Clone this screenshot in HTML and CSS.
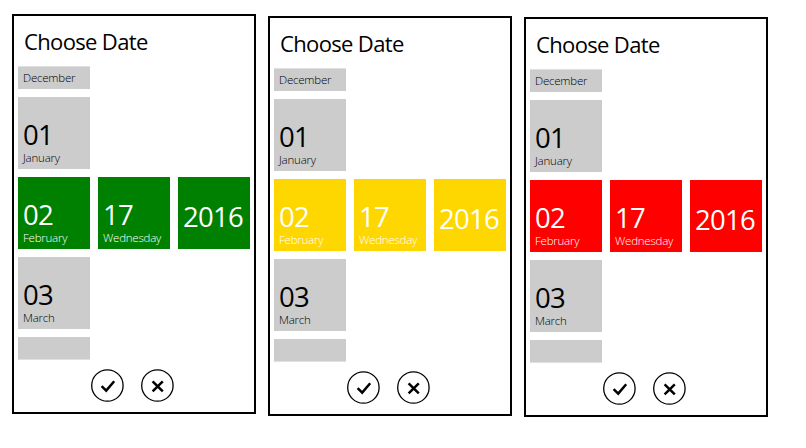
FILE: index.html
```
<!DOCTYPE html>
<html lang="en">
<head>
<meta charset="utf-8">
<title>Choose Date</title>
<link rel="stylesheet" href="styles.css">
</head>
<body>
<main class="pickers">
  <section class="picker green">
    <h1 class="title"><span>Choose Date</span></h1>
    <div class="columns">
      <div class="column">
        <div class="tile partial first"><span class="name">December</span></div>
        <div class="tile"><span class="number">01</span><span class="name">January</span></div>
        <div class="tile selected"><span class="number">02</span><span class="name">February</span></div>
        <div class="tile"><span class="number">03</span><span class="name">March</span></div>
        <div class="tile partial last"></div>
      </div>
      <div class="column"><div class="tile selected"><span class="number">17</span><span class="name">Wednesday</span></div></div>
      <div class="column"><div class="tile selected year"><span class="number">2016</span></div></div>
    </div>
    <div class="actions">
      <button class="action" aria-label="Accept"><svg viewBox="0 0 33 33"><circle cx="16.4" cy="16.5" r="15.7"/><path d="M10.6 17.2 15.2 21.6 23.2 12.2"/></svg></button>
      <button class="action" aria-label="Cancel"><svg viewBox="0 0 33 33"><circle cx="16.4" cy="16.5" r="15.7"/><path d="M11.6 12.3 21.8 22.3M21.8 12.3 11.6 22.3"/></svg></button>
    </div>
  </section>
  <section class="picker gold">
    <h1 class="title"><span>Choose Date</span></h1>
    <div class="columns">
      <div class="column">
        <div class="tile partial first"><span class="name">December</span></div>
        <div class="tile"><span class="number">01</span><span class="name">January</span></div>
        <div class="tile selected"><span class="number">02</span><span class="name">February</span></div>
        <div class="tile"><span class="number">03</span><span class="name">March</span></div>
        <div class="tile partial last"></div>
      </div>
      <div class="column"><div class="tile selected"><span class="number">17</span><span class="name">Wednesday</span></div></div>
      <div class="column"><div class="tile selected year"><span class="number">2016</span></div></div>
    </div>
    <div class="actions">
      <button class="action" aria-label="Accept"><svg viewBox="0 0 33 33"><circle cx="16.4" cy="16.5" r="15.7"/><path d="M10.6 17.2 15.2 21.6 23.2 12.2"/></svg></button>
      <button class="action" aria-label="Cancel"><svg viewBox="0 0 33 33"><circle cx="16.4" cy="16.5" r="15.7"/><path d="M11.6 12.3 21.8 22.3M21.8 12.3 11.6 22.3"/></svg></button>
    </div>
  </section>
  <section class="picker red">
    <h1 class="title"><span>Choose Date</span></h1>
    <div class="columns">
      <div class="column">
        <div class="tile partial first"><span class="name">December</span></div>
        <div class="tile"><span class="number">01</span><span class="name">January</span></div>
        <div class="tile selected"><span class="number">02</span><span class="name">February</span></div>
        <div class="tile"><span class="number">03</span><span class="name">March</span></div>
        <div class="tile partial last"></div>
      </div>
      <div class="column"><div class="tile selected"><span class="number">17</span><span class="name">Wednesday</span></div></div>
      <div class="column"><div class="tile selected year"><span class="number">2016</span></div></div>
    </div>
    <div class="actions">
      <button class="action" aria-label="Accept"><svg viewBox="0 0 33 33"><circle cx="16.4" cy="16.5" r="15.7"/><path d="M10.6 17.2 15.2 21.6 23.2 12.2"/></svg></button>
      <button class="action" aria-label="Cancel"><svg viewBox="0 0 33 33"><circle cx="16.4" cy="16.5" r="15.7"/><path d="M11.6 12.3 21.8 22.3M21.8 12.3 11.6 22.3"/></svg></button>
    </div>
  </section>
</main>
</body>
</html>
```
FILE: styles.css
```
* { box-sizing: border-box; }
body {
  margin: 0;
  background: #fff;
  color: #000;
  font-family: "Open Sans", "Noto Sans", sans-serif;
}
.pickers {
  display: flex;
  align-items: flex-start;
  gap: 12px;
  padding: 14px 0 0 12px;
}
.picker {
  display: flex;
  flex-direction: column;
  width: 244px;
  height: 400px;
  border: 2px solid #000;
  padding: 0 4px;
}
.green { --accent: #008000; }
.gold { --accent: #ffd700; margin-top: 2px; }
.red { --accent: #ff0000; margin-top: 3px; }
.title {
  height: 50px;
  margin: 0;
  padding: 10px 0 0 6px;
  font-size: 22px;
  line-height: 30px;
  font-weight: 400;
  letter-spacing: -0.65px;
  white-space: nowrap;
}
.columns {
  display: flex;
  align-items: center;
  gap: 8px;
  height: 294px;
}
.column {
  display: flex;
  flex-direction: column;
  gap: 8px;
  width: 72px;
}
.tile {
  display: flex;
  flex-direction: column;
  justify-content: flex-end;
  height: 72px;
  padding: 0 0 3px 5px;
  background: #ccc;
  white-space: nowrap;
}
.partial { height: 23px; }
.first { border-top: 1px solid #e0e0e0; }
.last { border-bottom: 1px solid #e0e0e0; }
.selected { background: var(--accent); color: #fff; }
.number {
  height: 31px;
  font-size: 27.5px;
  line-height: 32px;
  letter-spacing: -0.7px;
}
.name {
  font-size: 11.5px;
  line-height: 16px;
  font-weight: 300;
  letter-spacing: -0.22px;
}
.year { padding-bottom: 17px; }
.actions {
  display: flex;
  justify-content: center;
  gap: 17px;
  padding: 9px 3px 0 0;
}
.action {
  width: 33px;
  height: 33px;
  padding: 0;
  border: 0;
  background: none;
}
.action svg { display: block; width: 33px; height: 33px; fill: none; stroke: #000; }
.action circle { stroke-width: 1.3; }
.action path { stroke-width: 2.5; }
```
